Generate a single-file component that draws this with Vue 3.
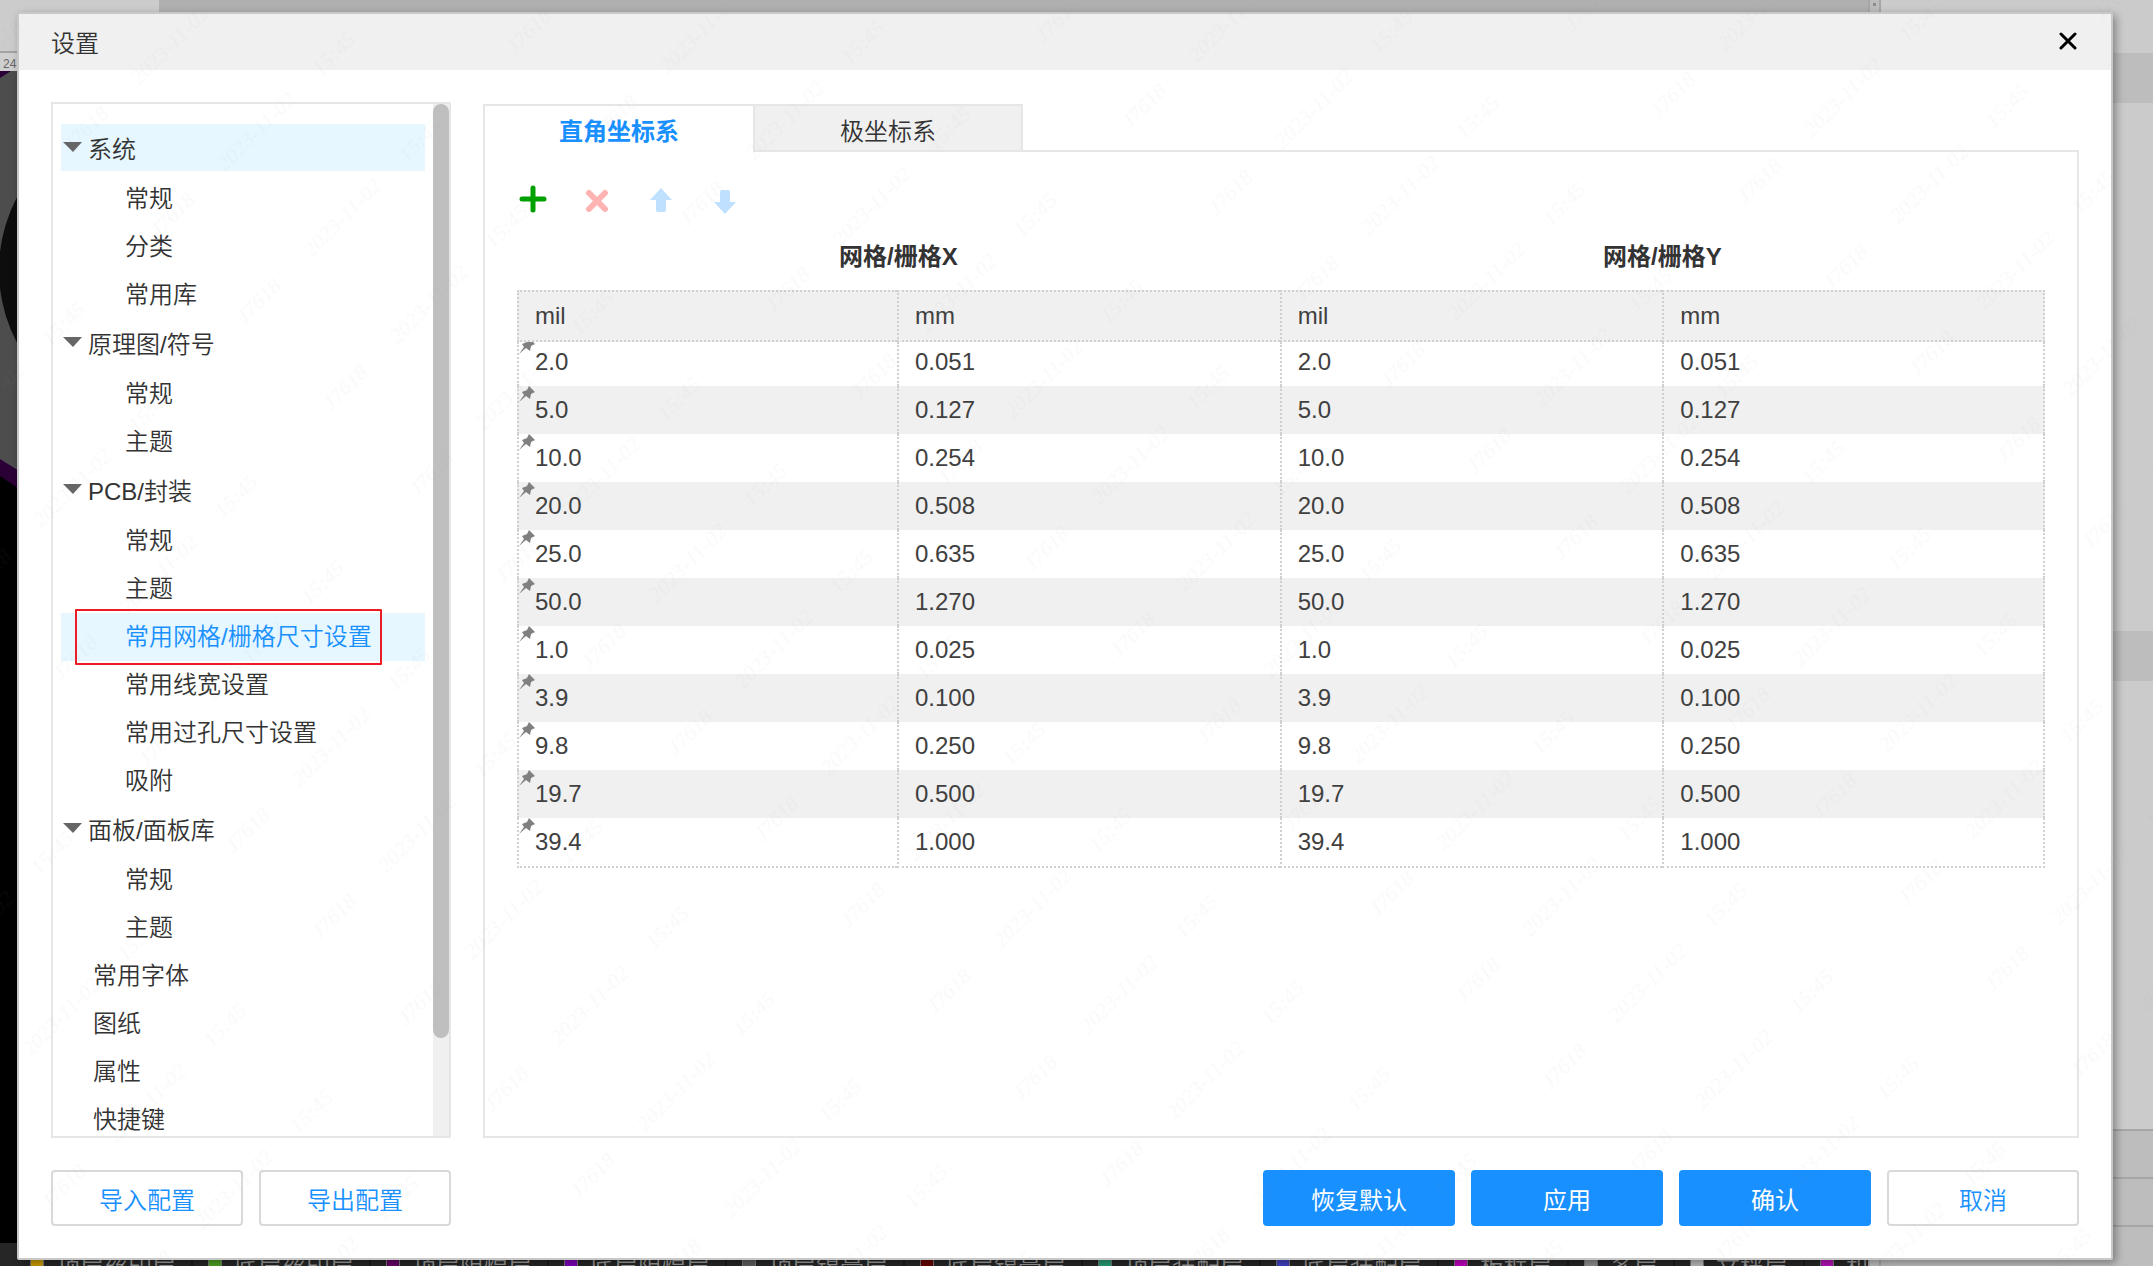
<script setup>
import { ref } from 'vue'

const groups = [
  { label: '系统', active: true, children: ['常规', '分类', '常用库'] },
  { label: '原理图/符号', children: ['常规', '主题'] },
  { label: 'PCB/封装', children: ['常规', '主题', '常用网格/栅格尺寸设置', '常用线宽设置', '常用过孔尺寸设置', '吸附'] },
  { label: '面板/面板库', children: ['常规', '主题'] }
]
const pages = ['常用字体', '图纸', '属性', '快捷键']
const selected = '常用网格/栅格尺寸设置'

const tab = ref('cartesian')

const rows = [
  ['2.0', '0.051'],
  ['5.0', '0.127'],
  ['10.0', '0.254'],
  ['20.0', '0.508'],
  ['25.0', '0.635'],
  ['50.0', '1.270'],
  ['1.0', '0.025'],
  ['3.9', '0.100'],
  ['9.8', '0.250'],
  ['19.7', '0.500'],
  ['39.4', '1.000']
]

const layers = [
  { name: '顶层丝印层', color: '#c89b00' },
  { name: '底层丝印层', color: '#4fa022' },
  { name: '顶层阻焊层', color: '#660066' },
  { name: '底层阻焊层', color: '#7d00b8' },
  { name: '顶层锡膏层', color: '#5e5e5e' },
  { name: '底层锡膏层', color: '#660000' },
  { name: '顶层装配层', color: '#259b74' },
  { name: '底层装配层', color: '#4141c0' },
  { name: '板框层', color: '#bd00bd' },
  { name: '多层', color: '#8f8f8f' },
  { name: '文档层', color: '#b9b9b9' },
  { name: '机械层', color: '#b312b3' }
]
</script>

<template>
  <div class="app">
    <div class="workspace">
      <div class="editor">
        <div class="doc-bar"><div class="doc-tab"></div><div class="doc-rest"></div></div>
        <div class="ruler">24</div>
        <div class="canvas">
          <svg class="board" width="40" height="430" viewBox="0 0 40 430" aria-hidden="true">
            <path d="M0 0H40V430H0z" fill="#4d4d4d" />
            <path d="M0 0H11L0 7z" fill="#2b0036" />
            <circle cx="156" cy="199" r="157" fill="#0d0d0d" />
            <path d="M0 388L40 413V430H0z" fill="#2b0036" />
            <path d="M0 405L40 432H0z" fill="#000" />
          </svg>
        </div>
        <div class="layer-bar">
          <div v-for="l in layers" :key="l.name" class="layer">
            <span class="swatch" :style="{ background: l.color }"></span>{{ l.name }}
          </div>
        </div>
      </div>
      <div class="splitter"><i></i></div>
      <div class="inspector">
        <div class="band b1"></div>
        <div class="band b2 dark"></div>
        <div class="band b3"></div>
        <div class="band b2 dark"></div>
        <div class="band b4"></div>
        <div class="band b5 dark line"></div>
        <div class="band b5 dark line"></div>
        <div class="band b6 dark line"></div>
      </div>
    </div>

    <section class="dialog" role="dialog" aria-labelledby="dialog-title">
      <header class="dialog-head">
        <h1 id="dialog-title">设置</h1>
        <button class="close" type="button" aria-label="关闭">
          <svg width="20" height="18" viewBox="0 0 20 18"><path d="M2 2L16 16M16 2L2 16" stroke="#000" stroke-width="3" stroke-linecap="round" fill="none" /></svg>
        </button>
      </header>

      <div class="dialog-body">
        <nav class="side">
          <div class="tree">
            <div v-for="g in groups" :key="g.label">
              <a href="#" class="group" :class="{ active: g.active }">
                <svg width="20" height="12" viewBox="0 0 20 12" aria-hidden="true"><path d="M0 0H19L10 10z" fill="#666" /></svg>{{ g.label }}
              </a>
              <a v-for="c in g.children" :key="c" href="#" class="item" :class="{ selected: c === selected }">
                {{ c }}<span v-if="c === selected" class="highlight"></span>
              </a>
            </div>
            <a v-for="p in pages" :key="p" href="#" class="item page">{{ p }}</a>
          </div>
          <div class="scrollbar"><div class="thumb"></div></div>
        </nav>

        <main class="main">
          <div class="tabs" role="tablist">
            <button type="button" role="tab" class="tab" :class="{ on: tab === 'cartesian' }" @click="tab = 'cartesian'">直角坐标系</button>
            <button type="button" role="tab" class="tab" :class="{ on: tab === 'polar' }" @click="tab = 'polar'">极坐标系</button>
            <div class="tab-line"></div>
          </div>
          <div class="panel">
            <div class="toolbar">
              <button type="button" class="tool" aria-label="添加">
                <svg width="32" height="32" viewBox="0 0 32 32"><path d="M16 4V26M5 15H27" stroke="#00a000" stroke-width="5" stroke-linecap="round" /></svg>
              </button>
              <button type="button" class="tool" aria-label="删除">
                <svg width="32" height="32" viewBox="0 0 32 32"><path d="M8 9L24 25M24 9L8 25" stroke="#ffb3b3" stroke-width="6" stroke-linecap="round" /></svg>
              </button>
              <button type="button" class="tool" aria-label="上移">
                <svg width="32" height="32" viewBox="0 0 32 32"><path d="M16 4L27 16H21V26Q21 28 19 28H13Q11 28 11 26V16H5z" fill="#bfe0ff" /></svg>
              </button>
              <button type="button" class="tool" aria-label="下移">
                <svg width="32" height="32" viewBox="0 0 32 32"><path d="M16 30L27 18H21V8Q21 6 19 6H13Q11 6 11 8V18H5z" fill="#bfe0ff" /></svg>
              </button>
            </div>
            <table class="grid">
              <colgroup><col class="col-first"><col><col><col></colgroup>
              <thead>
                <tr class="axis"><th colspan="2">网格/栅格X</th><th colspan="2">网格/栅格Y</th></tr>
                <tr class="units"><th>mil</th><th>mm</th><th>mil</th><th>mm</th></tr>
              </thead>
              <tbody>
                <tr v-for="r in rows" :key="r[0]">
                  <td class="pinned">
                    <svg class="pin" width="16" height="16" viewBox="0 0 16 16" aria-hidden="true"><path d="M10 0L16 6L14 7L12 8L11 13L7 10L0 16L5 9L3 6L8 4L9 2z" fill="#808080" /></svg>{{ r[0] }}
                  </td>
                  <td>{{ r[1] }}</td>
                  <td>{{ r[0] }}</td>
                  <td>{{ r[1] }}</td>
                </tr>
              </tbody>
            </table>
          </div>
        </main>
      </div>

      <footer class="dialog-foot">
        <button type="button" class="btn">导入配置</button>
        <button type="button" class="btn">导出配置</button>
        <span class="spacer"></span>
        <button type="button" class="btn primary">恢复默认</button>
        <button type="button" class="btn primary">应用</button>
        <button type="button" class="btn primary">确认</button>
        <button type="button" class="btn">取消</button>
      </footer>
    </section>

    <svg class="watermark" aria-hidden="true">
      <defs>
        <pattern id="mark" width="382" height="122" patternUnits="userSpaceOnUse" patternTransform="rotate(-45)">
          <g font-family="'Liberation Serif', serif" font-size="22" font-style="italic" text-anchor="middle" fill="#8c8c8c" fill-opacity="0.05">
            <text x="88" y="37">2023-11-02</text>
            <text x="198" y="37">15:45</text>
            <text x="352" y="37">J7618</text>
          </g>
        </pattern>
      </defs>
      <rect width="100%" height="100%" fill="url(#mark)" />
    </svg>
  </div>
</template>

<style>
body {
  margin: 0;
}
</style>

<style scoped>
.app {
  position: relative;
  height: 100vh;
  overflow: hidden;
  color: #333;
  font-family: "Liberation Sans", "Noto Sans CJK SC", sans-serif;
  font-size: 24px;
  font-weight: 350;
}
.app *,
.app *::before {
  box-sizing: border-box;
}
button {
  margin: 0;
  padding: 0;
  border: 0;
  background: none;
  color: inherit;
  font: inherit;
}
a {
  color: inherit;
  text-decoration: none;
}
svg {
  display: block;
  flex: none;
}

.workspace {
  display: flex;
  height: 100%;
  background: #ccc;
}
.editor {
  flex: 1;
  min-width: 0;
  display: flex;
  flex-direction: column;
}
.doc-bar {
  display: flex;
  height: 53px;
  border-bottom: 2px solid #a3a3a3;
}
.doc-tab {
  width: 159px;
}
.doc-rest {
  flex: 1;
  background: #b0b0b0;
}
.ruler {
  height: 18px;
  padding-left: 3px;
  background: #cfcfcf;
  color: #666;
  font-size: 12px;
  line-height: 22px;
}
.canvas {
  flex: 1;
  background: #000;
}
.layer-bar {
  display: flex;
  height: 23px;
  padding-left: 15px;
  overflow: hidden;
  background: #262626;
  color: #999;
}
.layer {
  flex: none;
  display: flex;
  align-items: center;
  gap: 12px;
  height: 44px;
  padding: 0 15px;
  border-right: 2px solid #1a1a1a;
  white-space: nowrap;
}
.swatch {
  width: 14px;
  height: 14px;
  margin-bottom: 8px;
  border: 1px solid #777;
}
.splitter {
  width: 13px;
  border: solid #a6a6a6;
  border-width: 0 2px;
  background: #bdbdbd;
}
.splitter i {
  display: block;
  width: 3px;
  height: 3px;
  margin: 3px;
  background: #8c8c8c;
}
.inspector {
  width: 272px;
  display: flex;
  flex-direction: column;
}
.band {
  background: #cbcbcb;
}
.dark {
  background: #bdbdbd;
}
.line {
  border-top: 2px solid #a6a6a6;
}
.b1 { height: 53px; }
.b2 { height: 50px; }
.b3 { height: 528px; }
.b4 { flex: 1; }
.b5 { height: 48px; }
.b6 { height: 41px; }

.dialog {
  position: absolute;
  inset: 12px 40px 6px 17px;
  display: flex;
  flex-direction: column;
  border: 2px solid #c8c8c8;
  border-radius: 2px;
  background: #fff;
  box-shadow: 3px 3px 8px rgba(0, 0, 0, 0.35);
}
.dialog-head {
  display: flex;
  align-items: center;
  justify-content: space-between;
  height: 56px;
  padding: 0 32px 2px;
  background: #f0f0f0;
}
.dialog-head h1 {
  margin: 0;
  font-size: 24px;
  font-weight: inherit;
}
.dialog-body {
  flex: 1;
  min-height: 0;
  display: flex;
  gap: 32px;
  padding: 32px 32px 0;
}

.side {
  width: 400px;
  display: flex;
  border: 2px solid #e6e6e6;
}
.tree {
  flex: 1;
  padding: 20px 8px 0;
  overflow: hidden;
}
.group {
  display: flex;
  align-items: center;
  gap: 5px;
  height: 47px;
  margin-bottom: 4px;
  padding-left: 2px;
}
.group.active,
.item.selected {
  background: #e6f7ff;
}
.item {
  position: relative;
  display: block;
  padding-left: 64px;
  line-height: 48px;
}
.item.page {
  padding-left: 32px;
}
.item.selected {
  color: #1890ff;
}
.highlight {
  position: absolute;
  top: -4px;
  left: 14px;
  width: 307px;
  height: 56px;
  border: 2px solid #ed1c24;
  border-radius: 1px;
}
.scrollbar {
  width: 16px;
  background: #f0f0f0;
}
.thumb {
  height: 90.5%;
  border-radius: 8px;
  background: #bfbfbf;
}

.main {
  flex: 1;
  min-width: 0;
  display: flex;
  flex-direction: column;
  padding-top: 2px;
}
.tabs {
  display: flex;
  height: 48px;
}
.tab {
  width: 270px;
  padding-top: 2px;
  border: 2px solid #e6e6e6;
  background: #f0f0f0;
}
.tab.on {
  padding-bottom: 2px;
  border-right: 0;
  border-bottom: 0;
  background: #fff;
  color: #1890ff;
  font-weight: 700;
}
.tab-line {
  flex: 1;
  border-bottom: 2px solid #e6e6e6;
}
.panel {
  flex: 1;
  min-height: 0;
  padding: 0 32px;
  border: 2px solid #e6e6e6;
  border-top: 0;
}
.toolbar {
  display: flex;
  gap: 32px;
  padding: 32px 0 8px;
}
.tool {
  width: 32px;
  height: 32px;
}

.grid {
  width: 100%;
  table-layout: fixed;
  border-collapse: separate;
  border-spacing: 0;
  color: #404040;
}
.col-first {
  width: 380px;
}
.grid th,
.grid td {
  height: 48px;
  padding: 0 0 0 16px;
  border-left: 2px dotted #d0d0d0;
  text-align: left;
  font-weight: 400;
  line-height: 28px;
}
.grid th:last-child,
.grid td:last-child {
  border-right: 2px dotted #d0d0d0;
}
.grid .axis th {
  height: 66px;
  padding: 0;
  border: 0;
  color: #333;
  text-align: center;
  font-weight: 700;
}
.grid .units th {
  height: 52px;
  border-top: 2px dotted #d0d0d0;
  border-bottom: 2px dotted #d0d0d0;
  background: #f0f0f0;
}
.grid tbody tr:nth-child(even) {
  background: #f0f0f0;
}
.grid tbody tr:first-child td {
  height: 44px;
  padding-bottom: 4px;
}
.grid tbody tr:last-child td {
  height: 50px;
  border-bottom: 2px dotted #d0d0d0;
}
.grid .pinned {
  position: relative;
  overflow: hidden;
}
.pin {
  position: absolute;
  top: 0;
  left: 0;
}
.grid tbody tr:first-child .pin {
  top: -4px;
}

.dialog-foot {
  display: flex;
  gap: 16px;
  padding: 32px;
}
.spacer {
  flex: 1;
}
.btn {
  width: 192px;
  height: 56px;
  border: 2px solid #d9d9d9;
  border-radius: 4px;
  background: #fff;
  color: #1890ff;
}
.btn.primary {
  border-color: #1890ff;
  background: #1890ff;
  color: #fff;
  font-weight: 400;
}

.watermark {
  position: absolute;
  inset: 0;
  width: 100%;
  height: 100%;
  pointer-events: none;
}
</style>
